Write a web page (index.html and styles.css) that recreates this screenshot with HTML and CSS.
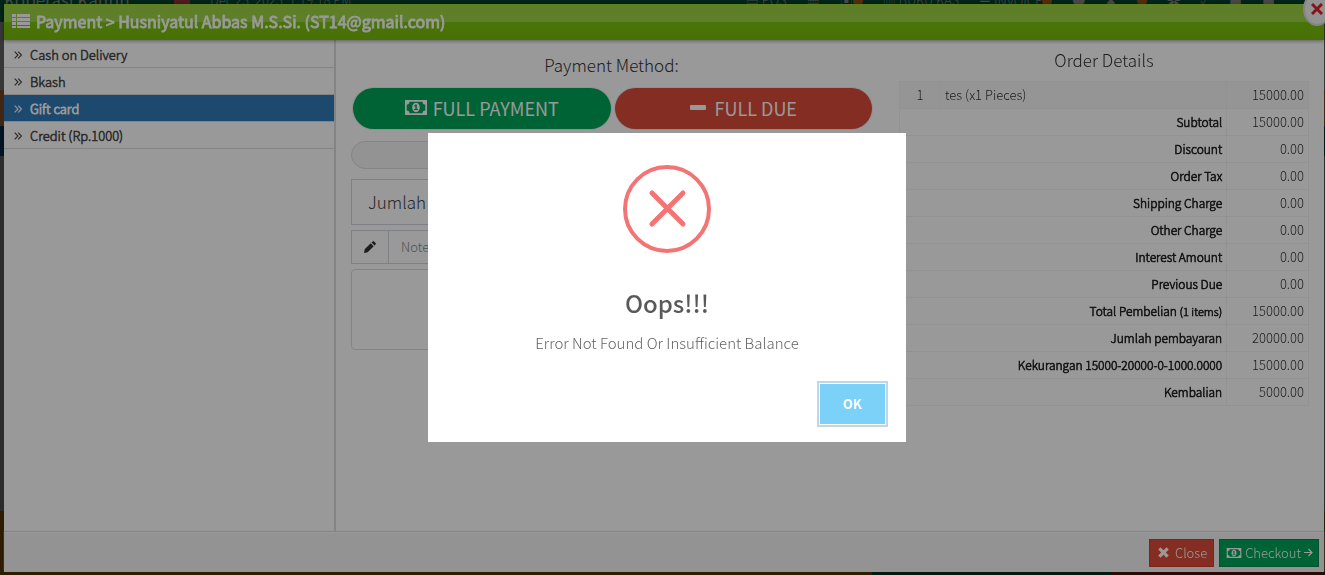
FILE: index.html
```
<!DOCTYPE html>
<html lang="id">
<head>
  <meta charset="UTF-8">
  <meta name="viewport" content="width=device-width, initial-scale=1">
  <title>Payment</title>
  <link rel="stylesheet" href="styles.css">
</head>
<body>

<!-- shared icons -->
<svg class="sprite" aria-hidden="true">
  <symbol id="i-list" viewBox="0 0 18 14">
    <path d="M0 0h4v3H0zM5 0h13v3H5zM0 4h4v3H0zM5 4h13v3H5zM0 8h4v3H0zM5 8h13v3H5zM0 12h4v2H0zM5 12h13v2H5z"/>
  </symbol>
  <symbol id="i-angles" viewBox="0 0 8 8">
    <path d="M.7.7 4 4 .7 7.300M4.200.7 7.500 4 4.200 7.300" fill="none" stroke="currentColor" stroke-width="1.100"/>
  </symbol>
  <symbol id="i-money" viewBox="0 0 22 15">
    <path fill-rule="evenodd" d="M0 0h22v15H0zM4.500 1.800a2.800 2.800 0 0 1-2.800 2.800v5.800a2.800 2.800 0 0 1 2.800 2.800h13a2.800 2.800 0 0 1 2.800-2.800V4.600a2.800 2.800 0 0 1-2.800-2.800zM11 2.800c2.300 0 3.800 2.100 3.800 4.700s-1.500 4.700-3.800 4.700-3.800-2.100-3.800-4.700S8.700 2.800 11 2.800zM10.400 4.500 9 5.800l.7.8.6-.5V9H9v1.100h4V9h-1.200V4.500z"/>
  </symbol>
  <symbol id="i-pencil" viewBox="0 0 12 12">
    <path d="m0 12 .7-3.700L6.700 2.300l3 3-6 6zM7.500 1.500 8.600.4q.7-.6 1.400 0L11.600 2q.6.7 0 1.400l-1.100 1.100z"/>
  </symbol>
  <symbol id="i-times" viewBox="0 0 11 11">
    <path d="M2.500.2 5.500 3.200 8.500.2l2.300 2.300-3 3 3 3-2.300 2.300-3-3-3 3L.2 8.500l3-3-3-3z"/>
  </symbol>
</svg>

<div class="app">
  <header class="topbar">
    <strong>Koperasi Kantin</strong>
    <span class="flag"></span>
    <span class="clock">Dec 23, 2023, 1:19:18 PM</span>
    <nav class="topnav">
      <span>▤ POS</span><span>▦</span><span>▣<i></i></span><span>▥ BUKU KAS</span><span>☰ INVOICE<i></i></span><span>●</span><span>♟</span><span><i></i></span><span>✿</span><span>✓</span><span>■</span><span>■</span>
    </nav>
  </header>
  <div class="rail">
    <span class="rail-green"></span>
    <span class="rail-light"></span>
    <span class="rail-orange"></span>
    <span class="rail-navy"></span>
    <span class="rail-dark"></span>
  </div>
  <footer class="tiles"><span></span><span></span><span></span></footer>
</div>

<section class="modal" aria-labelledby="modal-title">
  <button class="modal-x" type="button" aria-label="Close">
    <svg viewBox="0 0 12 12"><path d="m1 1 10 10M11 1 1 11" stroke="currentColor" stroke-width="3"/></svg>
  </button>
  <header class="modal-header">
    <svg class="icon-list"><use href="#i-list"/></svg>
    <h1 id="modal-title">Payment &gt; Husniyatul Abbas M.S.Si. (ST14@gmail.com)</h1>
  </header>

  <div class="modal-body">
    <nav class="methods">
      <a href="#"><svg><use href="#i-angles"/></svg>Cash on Delivery</a>
      <a href="#"><svg><use href="#i-angles"/></svg>Bkash</a>
      <a href="#" class="active"><svg><use href="#i-angles"/></svg>Gift card</a>
      <a href="#"><svg><use href="#i-angles"/></svg>Credit (Rp.1000)</a>
    </nav>

    <form class="payment">
      <h2>Payment Method:</h2>
      <div class="pay-buttons">
        <button type="button" class="pill green"><svg class="icon-money"><use href="#i-money"/></svg>FULL PAYMENT</button>
        <button type="button" class="pill red"><span class="minus"></span>FULL DUE</button>
      </div>
      <div class="method-name"></div>
      <input class="amount" type="text" aria-label="Jumlah" placeholder="Jumlah">
      <div class="note-group">
        <label for="note"><svg><use href="#i-pencil"/></svg></label>
        <input id="note" type="text" placeholder="Note" aria-label="Note">
      </div>
      <div class="info-box"></div>
    </form>

    <div class="order">
      <h2>Order Details</h2>
      <table>
        <tbody>
          <tr class="item"><td class="num">1</td><td>tes (x1 Pieces)</td><td class="sum">15000.00</td></tr>
          <tr><th colspan="2">Subtotal</th><td class="sum">15000.00</td></tr>
          <tr><th colspan="2">Discount</th><td class="sum">0.00</td></tr>
          <tr><th colspan="2">Order Tax</th><td class="sum">0.00</td></tr>
          <tr><th colspan="2">Shipping Charge</th><td class="sum">0.00</td></tr>
          <tr><th colspan="2">Other Charge</th><td class="sum">0.00</td></tr>
          <tr><th colspan="2">Interest Amount</th><td class="sum">0.00</td></tr>
          <tr><th colspan="2">Previous Due</th><td class="sum">0.00</td></tr>
          <tr><th colspan="2">Total Pembelian <small>(1 items)</small></th><td class="sum">15000.00</td></tr>
          <tr><th colspan="2">Jumlah pembayaran</th><td class="sum">20000.00</td></tr>
          <tr><th colspan="2">Kekurangan 15000-20000-0-1000.0000</th><td class="sum">15000.00</td></tr>
          <tr><th colspan="2">Kembalian</th><td class="sum">5000.00</td></tr>
        </tbody>
      </table>
    </div>
  </div>

  <footer class="modal-footer">
    <button type="button" class="btn red"><svg class="icon-times"><use href="#i-times"/></svg>Close</button>
    <button type="button" class="btn green"><svg class="icon-money"><use href="#i-money"/></svg>Checkout<svg class="icon-arrow" viewBox="0 0 9 9"><path d="M0 4.500h8M4.500 1 8 4.500 4.500 8" fill="none" stroke="currentColor" stroke-width="1.200"/></svg></button>
  </footer>
</section>

<div class="overlay">
  <div class="alert" role="alertdialog" aria-labelledby="alert-title">
    <svg class="alert-icon" viewBox="0 0 88 88">
      <circle cx="44" cy="44" r="42" stroke-width="4"/>
      <path d="m29 28 31 31M60 28 29 59" stroke-width="5" stroke-linecap="round"/>
    </svg>
    <h3 id="alert-title">Oops!!!</h3>
    <p>Error Not Found Or Insufficient Balance</p>
    <div class="alert-footer">
      <button type="button" class="ok">OK</button>
    </div>
  </div>
</div>

</body>
</html>
```

FILE: styles.css
```
* {
  margin: 0;
  padding: 0;
  box-sizing: border-box;
}

body {
  font-family: "Noto Sans CJK SC", "Noto Sans", sans-serif;
  font-size: 13px;
  font-weight: 300;
  line-height: 18px;
  color: #333;
  height: 100vh;
  overflow: hidden;
}

svg {
  fill: currentColor;
  flex: none;
}

button, input {
  font: inherit;
}

button {
  cursor: pointer;
}

.sprite {
  position: absolute;
  width: 0;
  height: 0;
}

/* page behind the modal */
.app {
  display: flex;
  flex-direction: column;
  height: 100vh;
  background: #4e2d00;
}

.topbar {
  display: flex;
  align-items: flex-start;
  height: 4px;
  overflow: hidden;
  background: #003d28;
  color: #777;
  line-height: 0;
  padding-left: 4px;
  white-space: nowrap;
}

.topbar strong {
  font-size: 17px;
  width: 170px;
}

.flag {
  width: 16px;
  height: 4px;
  background: #8a2a35;
}

.clock {
  margin-left: 20px;
  font-size: 13px;
}

.topnav {
  display: flex;
  gap: 20px;
  margin-left: auto;
  padding-right: 50px;
}

.topnav i {
  display: inline-block;
  width: 10px;
  height: 6px;
  border-radius: 0 0 5px 5px;
  background: #8c4a14;
}

.rail {
  flex: 1;
  display: flex;
  flex-direction: column;
}

.rail-green {
  height: 18px;
  background: #003d28;
}

.rail-light {
  height: 68px;
  background: #5c5c5c;
}

.rail-orange {
  height: 36px;
  background: #6b4020;
}

.rail-navy {
  height: 30px;
  background: #00233d;
}

.rail-dark {
  height: 355px;
  background: #4a4a4a;
}

.tiles {
  display: grid;
  grid-template-columns: 872fr 240fr 213fr;
  height: 4px;
}

.tiles span {
  background: #4e2d00;
}

.tiles span:nth-child(2) {
  background: #002e1c;
}

.tiles span:nth-child(3) {
  background: #4a0f0a;
}

/* payment modal */
.modal {
  position: fixed;
  inset: 4px 1px 3px 4px;
  display: flex;
  flex-direction: column;
  background: #fff;
}

.modal-header {
  display: flex;
  align-items: center;
  gap: 6px;
  height: 36px;
  padding: 0 8px 2px;
  color: #fff;
  background: linear-gradient(#9bd43d, #9fd34c 50%, #7bc30d 50%, #78bb0a);
  box-shadow: 0 1px 4px rgba(0, 0, 0, 0.4);
  z-index: 1;
}

.modal-header h1 {
  font-size: 16px;
  font-weight: 400;
  line-height: 24px;
  -webkit-text-stroke: 0.05em;
}

.icon-list {
  width: 18px;
  height: 14px;
}

.modal-x {
  position: absolute;
  top: -12px;
  right: -7px;
  z-index: 2;
  display: grid;
  place-items: center;
  width: 28px;
  height: 34px;
  border: 2px solid #ddd;
  border-radius: 50%;
  background: #f5f5f5;
  color: #e0242a;
}

.modal-x svg {
  width: 12px;
  height: 12px;
}

.modal-body {
  flex: 1;
  display: grid;
  grid-template-columns: 3fr 5fr 4fr;
}

.methods {
  padding-top: 1px;
}

.methods a {
  display: flex;
  align-items: center;
  gap: 8px;
  height: 27px;
  padding: 1px 0 0 10px;
  border-bottom: 1px solid #ddd;
  color: #444;
  text-decoration: none;
  -webkit-text-stroke: 0.04em;
}

.methods svg {
  width: 8px;
  height: 8px;
}

.methods .active {
  background: #337ab7;
  color: #fff;
  -webkit-text-stroke: 0.06em;
}

.payment {
  display: flex;
  flex-direction: column;
  padding: 13px 12px 0 15px;
  border-left: 2px solid #ddd;
}

.payment h2,
.order h2 {
  font-size: 17px;
  font-weight: 300;
  line-height: 24px;
  text-align: center;
}

.pay-buttons {
  display: grid;
  grid-template-columns: 1fr 1fr;
  gap: 4px;
  margin: 11px 0 12px;
  padding-left: 2px;
}

.pill {
  display: flex;
  align-items: center;
  justify-content: center;
  gap: 6px;
  height: 41px;
  padding-bottom: 2px;
  border: 0;
  border-radius: 21px;
  color: #fff;
  font-size: 18px;
  font-weight: 400;
  box-shadow: 0 0 0 1px #eee;
}

.green {
  background: #00a65a;
}

.red {
  background: #dd4b39;
}

.icon-money {
  width: 22px;
  height: 15px;
}

.minus {
  width: 16px;
  height: 5px;
  margin-right: 3px;
  border-radius: 1px;
  background: #fff;
}

.method-name {
  height: 28px;
  margin-bottom: 10px;
  border: 1px solid #ddd;
  border-radius: 14px;
  background: #f5f5f5;
}

.amount {
  height: 46px;
  margin-bottom: 5px;
  padding: 0 16px 2px;
  border: 1px solid #d2d6de;
  background: #fff;
  font-size: 17px;
}

.amount::placeholder {
  color: #444;
}

.note-group {
  display: flex;
  height: 34px;
  margin-bottom: 5px;
  border: 1px solid #d2d6de;
}

.note-group label {
  display: grid;
  place-items: center;
  width: 37px;
  border-right: 1px solid #d2d6de;
}

.note-group svg {
  width: 12px;
  height: 12px;
}

.note-group input {
  flex: 1;
  padding: 0 12px;
  border: 0;
}

.note-group input::placeholder {
  color: #888;
}

.info-box {
  height: 81px;
  border: 1px solid #ddd;
  border-radius: 4px;
}

.order {
  padding: 8px 15px 0;
}

.order table {
  width: 100%;
  margin-top: 9px;
  border-collapse: collapse;
  table-layout: fixed;
}

.order td,
.order th {
  height: 27px;
  padding: 0 4px;
  border: 1px solid #f4f4f4;
}

.order th {
  font-size: 12px;
  font-weight: 300;
  text-align: right;
  color: #222;
  -webkit-text-stroke: 0.05em;
}

.order small {
  font-size: 11px;
}

.order .item {
  background: #f9f9f9;
}

.order .num {
  width: 10%;
  text-align: center;
}

.order .sum {
  width: 20%;
  text-align: right;
}

.modal-footer {
  display: flex;
  justify-content: flex-end;
  align-items: center;
  gap: 5px;
  height: 40px;
  padding: 0 5px;
  background: #f5f5f5;
  border-top: 1px solid #fff;
  box-shadow: 0 -1px 1px #ddd;
}

.btn {
  display: flex;
  align-items: center;
  gap: 6px;
  height: 28px;
  padding: 0 6px 0 8px;
  border: 1px solid #d73925;
  color: #fff;
}

.btn.green {
  gap: 3px;
  padding: 0 5px 0 6px;
  border-color: #008d4c;
}

.btn .icon-money {
  width: 16px;
  height: 10px;
}

.icon-times {
  width: 11px;
  height: 11px;
}

.icon-arrow {
  width: 9px;
  height: 9px;
}

/* error alert */
.overlay {
  position: fixed;
  inset: 0;
  z-index: 10;
  display: grid;
  place-items: center;
  padding-left: 9px;
  background: rgba(0, 0, 0, 0.4);
}

.alert {
  width: 478px;
  max-width: 100%;
  padding-top: 32px;
  background: #fff;
  text-align: center;
}

.alert-icon {
  display: block;
  width: 88px;
  height: 88px;
  margin: 0 auto;
  fill: none;
  stroke: #f27474;
}

.alert h3 {
  margin-top: 31px;
  font-size: 24px;
  font-weight: 500;
  line-height: 38px;
  color: rgba(0, 0, 0, 0.65);
}

.alert p {
  margin-top: 9px;
  font-size: 15px;
  line-height: 24px;
  color: rgba(0, 0, 0, 0.64);
}

.alert-footer {
  display: flex;
  justify-content: flex-end;
  margin-top: 29px;
  padding: 0 21px 18px;
}

.ok {
  height: 40px;
  padding: 0 23px;
  border: 0;
  background: #7cd1f9;
  color: #fff;
  font-weight: 700;
  box-shadow: 0 0 0 1px #fff, 0 0 0 3px rgba(43, 114, 165, 0.29);
}
```
